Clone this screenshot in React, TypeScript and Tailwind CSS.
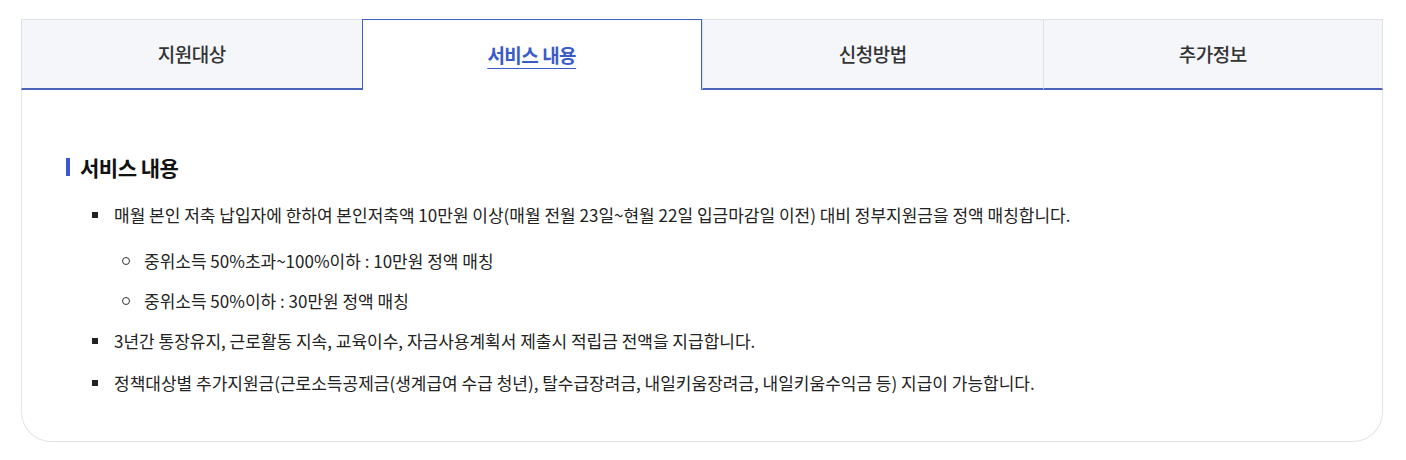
import React from "react";

const tabs = ["지원대상", "서비스 내용", "신청방법", "추가정보"];
const activeIndex = 1;

export default function App() {
  return (
    <div
      className="bg-white w-[1406px] h-[460px] pt-[19px] pl-[21px]"
      style={{ fontFamily: '"Noto Sans CJK KR", "Noto Sans", sans-serif' }}
    >
      <div className="w-[1362px]">
        <div className="grid grid-cols-4 h-[71px]">
          {tabs.map((t, i) => {
            if (i === activeIndex) {
              return (
                <div
                  key={t}
                  className="flex items-center justify-center bg-white border border-b-0 border-[#4361c2] text-[19px] font-bold tracking-[-0.5px] text-[#3a5bc7] underline underline-offset-[5px]"
                >
                  {t}
                </div>
              );
            }
            return (
              <div
                key={t}
                className={`flex items-center justify-center bg-[#f4f6fa] border-t border-l border-[#dde1e8] border-b-2 border-b-[#4a63b8] text-[19px] font-medium tracking-[-0.5px] text-[#333] ${
                  i === 3 ? "border-r" : ""
                }`}
              >
                {t}
              </div>
            );
          })}
        </div>
        <div className="h-[352px] border-l border-r border-b border-[#e2e4e8] rounded-b-[30px] pl-[45px] pt-[63px]">
          <h3 className="flex items-center text-[21px] leading-[28px] font-bold tracking-[-0.5px] text-[#111]">
            <span className="inline-block w-[4px] h-[18px] bg-[#3a5bd0] mr-[10px] -ml-[1px]" />
            서비스 내용
          </h3>
          <ul className="mt-[22px] text-[17px] leading-[24px] text-[#222]">
            <li className="flex">
              <span className="w-[6px] h-[6px] bg-[#222] mt-[9px] ml-[25px] mr-[16px] shrink-0" />
              <div>
                <p>매월 본인 저축 납입자에 한하여 본인저축액 10만원 이상(매월 전월 23일~현월 22일 입금마감일 이전) 대비 정부지원금을 정액 매칭합니다.</p>
                <ul className="mt-[22px] -ml-[22px]">
                  <li className="flex">
                    <span className="w-[8px] h-[8px] rounded-full border border-[#333] mt-[8px] ml-[30px] mr-[14px] shrink-0" />
                    <p>중위소득 50%초과~100%이하 : 10만원 정액 매칭</p>
                  </li>
                  <li className="flex mt-[16px]">
                    <span className="w-[8px] h-[8px] rounded-full border border-[#333] mt-[8px] ml-[30px] mr-[14px] shrink-0" />
                    <p>중위소득 50%이하 : 30만원 정액 매칭</p>
                  </li>
                </ul>
              </div>
            </li>
            <li className="flex mt-[16px]">
              <span className="w-[6px] h-[6px] bg-[#222] mt-[9px] ml-[25px] mr-[16px] shrink-0" />
              <p>3년간 통장유지, 근로활동 지속, 교육이수, 자금사용계획서 제출시 적립금 전액을 지급합니다.</p>
            </li>
            <li className="flex mt-[18px]">
              <span className="w-[6px] h-[6px] bg-[#222] mt-[9px] ml-[25px] mr-[16px] shrink-0" />
              <p>정책대상별 추가지원금(근로소득공제금(생계급여 수급 청년), 탈수급장려금, 내일키움장려금, 내일키움수익금 등) 지급이 가능합니다.</p>
            </li>
          </ul>
        </div>
      </div>
    </div>
  );
}
